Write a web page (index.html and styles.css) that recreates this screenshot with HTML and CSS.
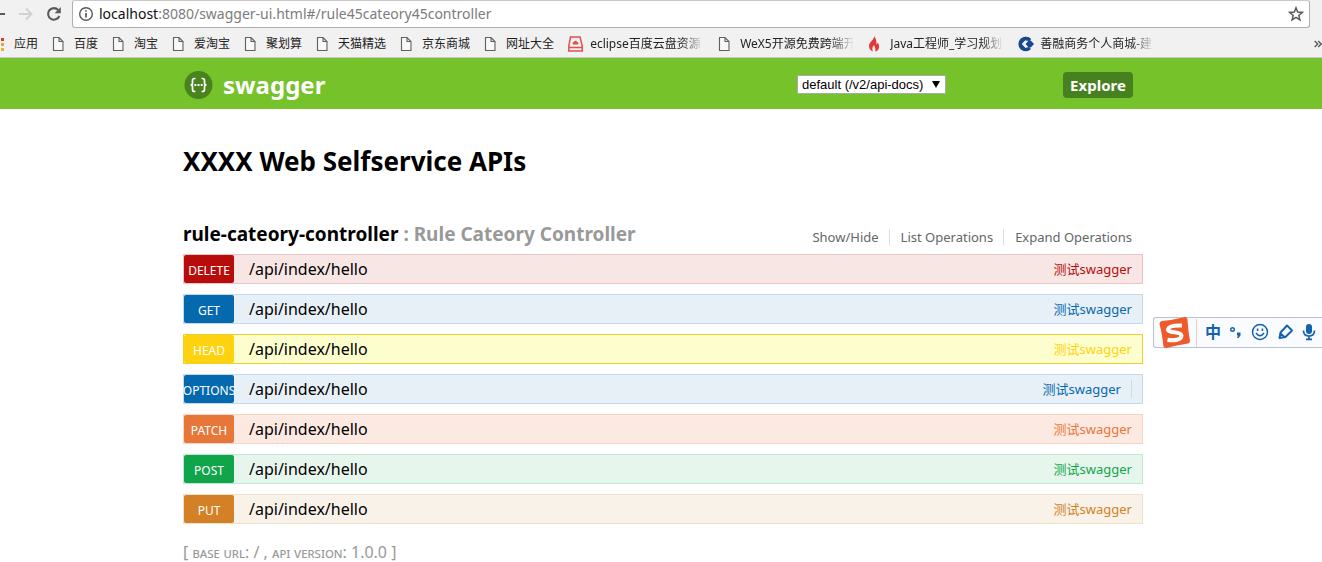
FILE: index.html
```html
<!DOCTYPE html>
<html lang="zh-CN">
<head>
<meta charset="utf-8">
<title>Swagger UI</title>
<link rel="stylesheet" href="styles.css">
</head>
<body>
<svg class="defs" width="0" height="0" aria-hidden="true">
  <symbol id="page" viewBox="0 0 16 16"><path d="M1.500 1.500h5.500l4 4v9h-9.500z M7 1.500v4h4" fill="#fff" fill-opacity=".5" stroke="#606060" stroke-width="1.100"/></symbol>
</svg>
<div class="browser">
  <div class="toolbar">
    <button class="nav" aria-label="Back"><svg width="16" height="16" viewBox="0 0 16 16"><path d="M15 8H2M8 2L2 8l6 6" fill="none" stroke="#5a5a5a" stroke-width="2"/></svg></button>
    <button class="nav" aria-label="Forward"><svg width="16" height="16" viewBox="0 0 16 16"><path d="M1 8h12M8 2.500l5.500 5.500L8 13.500" fill="none" stroke="#d2d2d2" stroke-width="2"/></svg></button>
    <button class="nav" aria-label="Reload"><svg width="16" height="16" viewBox="0 0 16 16"><path d="M13.300 10A5.800 5.800 0 1 1 12.200 4" fill="none" stroke="#5a5a5a" stroke-width="2.100"/><path d="M14.800 1v6.200H8.600z" fill="#5a5a5a"/></svg></button>
    <div class="address">
      <svg width="16" height="16" viewBox="0 0 16 16"><circle cx="8" cy="8" r="6.300" fill="none" stroke="#5a5a5a" stroke-width="1.400"/><path d="M8 7v4.500M8 4.200v1.600" stroke="#5a5a5a" stroke-width="1.700"/></svg>
      <div class="url"><span class="host">localhost</span>:8080/swagger-ui.html#/rule45cateory45controller</div>
      <svg width="16" height="16" viewBox="0 0 16 16"><path d="M8 1.800l1.700 4.300 4.600.3-3.500 3 1.100 4.500L8 11.400l-3.900 2.500 1.100-4.500-3.500-3 4.600-.3z" fill="none" stroke="#5a5a5a" stroke-width="1.500"/></svg>
    </div>
  </div>
  <nav class="bookmarks">
    <a href="#"><svg width="16" height="16" viewBox="0 0 16 16"><path fill="#d93a2b" d="M1 2h3v3H1zM5 2h3v3H5zM9 2h3v3H9z"/><path fill="#eba13c" d="M1 7h3v3H1zM9 7h3v3H9z"/><path fill="#e9b23c" d="M1 12h3v3H1zM9 12h3v3H9z"/></svg><span>应用</span></a>
    <a href="#"><svg width="16" height="16"><use href="#page"/></svg><span>百度</span></a>
    <a href="#"><svg width="16" height="16"><use href="#page"/></svg><span>淘宝</span></a>
    <a href="#"><svg width="16" height="16"><use href="#page"/></svg><span>爱淘宝</span></a>
    <a href="#"><svg width="16" height="16"><use href="#page"/></svg><span>聚划算</span></a>
    <a href="#"><svg width="16" height="16"><use href="#page"/></svg><span>天猫精选</span></a>
    <a href="#"><svg width="16" height="16"><use href="#page"/></svg><span>京东商城</span></a>
    <a href="#"><svg width="16" height="16"><use href="#page"/></svg><span>网址大全</span></a>
    <a href="#" class="long"><svg width="16" height="16" viewBox="0 0 16 16"><path d="M2.500 1h9.500L14.300 10v5H.8v-5zM.8 11.500h13.500" fill="none" stroke="#e2504a" stroke-width="1.500"/><path d="M5 8.500a1.500 1.500 0 0 1 .8-2.600 1.800 1.800 0 0 1 3.400 0A1.500 1.500 0 0 1 10 8.500z" fill="#e2504a"/></svg><span>eclipse百度云盘资源</span></a>
    <a href="#" class="long"><svg width="16" height="16"><use href="#page"/></svg><span>WeX5开源免费跨端开</span></a>
    <a href="#" class="long"><svg width="16" height="16" viewBox="0 0 16 16"><path d="M6 0c1 3-5 6-5 10 0 3 2 5 4 5.500C3.500 13 4.500 11 6 9c.5 2 2 3 1.300 6.500C10 15 11.500 12.500 11 9.500c-.2-1.500-.8-2.500-1.300-3-.1 1-.5 1.500-1.200 2C8.500 5 8 2 6 0z" fill="#e2383a"/></svg><span>Java工程师_学习规划</span></a>
    <a href="#" class="long"><svg width="16" height="16" viewBox="0 0 16 16"><path d="M13 3A7.300 7.300 0 1 0 13 13L10.500 10.500 7.500 12 3.800 8 7.500 4l3 1.500z" fill="#16498e"/><path d="M7 .7Q11 .7 13 3L10.500 6 7 4z" fill="#16498e"/><path d="M10.500 4.500h2.200L16 8l-3.300 3.500h-2.200L7.200 8z" fill="#16498e"/><path d="M7.500 4.800h2.800L7.500 8l2.800 3.200H7.500L4.500 8z" fill="#f2f1f2"/></svg><span>善融商务个人商城-建</span></a>
    <button class="more" aria-label="More bookmarks"><svg width="8" height="8" viewBox="0 0 8 8"><path d="M.7 1l3 3-3 3M4.200 1l3 3-3 3" fill="none" stroke="#5a5a5a" stroke-width="1.400"/></svg></button>
  </nav>
</div>
<header class="header">
  <div class="wrap bar">
    <a class="logo" href="#"><svg width="30" height="30" viewBox="0 0 30 30"><circle cx="15.500" cy="15" r="14" fill="#48831d"/><path d="M12.500 8.500h-1q-2 0-2 2v2.500q0 2-2 2 2 0 2 2v2.500q0 2 2 2h1M18.500 8.500h1q2 0 2 2v2.500q0 2 2 2-2 0-2 2v2.500q0 2-2 2h-1" fill="none" stroke="#fff" stroke-width="1.700"/><path d="M11.300 14h2v2h-2zM14.500 14h2v2h-2zM17.700 14h2v2h-2z" fill="#fff"/></svg><span>swagger</span></a>
    <form class="picker">
      <select aria-label="API definition"><option>default (/v2/api-docs)</option></select>
      <button type="button">Explore</button>
    </form>
  </div>
</header>
<main class="wrap">
  <h1>XXXX Web Selfservice APIs</h1>
  <section>
    <div class="resource">
      <h2><a href="#">rule-cateory-controller</a> : Rule Cateory Controller</h2>
      <ul><li><a href="#">Show/Hide</a></li><li><a href="#">List Operations</a></li><li><a href="#">Expand Operations</a></li></ul>
    </div>
    <div class="operations">
      <div class="op delete"><a class="method" href="#">DELETE</a><a class="path" href="#">/api/index/hello</a><a class="note" href="#">测试swagger</a></div>
      <div class="op get"><a class="method" href="#">GET</a><a class="path" href="#">/api/index/hello</a><a class="note" href="#">测试swagger</a></div>
      <div class="op head"><a class="method" href="#">HEAD</a><a class="path" href="#">/api/index/hello</a><a class="note" href="#">测试swagger</a></div>
      <div class="op options"><a class="method" href="#">OPTIONS</a><a class="path" href="#">/api/index/hello</a><a class="note" href="#">测试swagger</a></div>
      <div class="op patch"><a class="method" href="#">PATCH</a><a class="path" href="#">/api/index/hello</a><a class="note" href="#">测试swagger</a></div>
      <div class="op post"><a class="method" href="#">POST</a><a class="path" href="#">/api/index/hello</a><a class="note" href="#">测试swagger</a></div>
      <div class="op put"><a class="method" href="#">PUT</a><a class="path" href="#">/api/index/hello</a><a class="note" href="#">测试swagger</a></div>
    </div>
  </section>
  <footer>[ <span>base url</span>: / , <span>api version</span>: 1.0.0 ]</footer>
</main>
<aside class="ime">
  <svg class="sogou" width="34" height="32" viewBox="0 0 34 32"><path d="M4 4Q15 3 27 0q2 0 2.400 2 .8 12 2.600 22 0 2-2 2.500Q19 28 8 31q-2 0-2.600-2Q4 16 1.500 7 1.500 4.500 4 4z" fill="#ee5a2a"/><path d="M24 8.500Q10.500 8 10 12.500c-.3 4 13 1.500 13.500 6 .4 4.500-8 5.500-14 4.300" fill="none" stroke="#fff" stroke-width="4"/></svg>
  <div class="tools">
    <button>中</button>
    <button aria-label="Punctuation"><svg width="16" height="18" viewBox="0 0 16 18"><circle cx="4.500" cy="6.500" r="1.800" fill="none" stroke="#1462ad" stroke-width="1.400"/><path d="M9 9.500h3.500v3L10.500 15H9l1-2.500H9z" fill="#1462ad"/></svg></button>
    <button aria-label="Emoji"><svg width="18" height="18" viewBox="0 0 18 18"><circle cx="9" cy="9" r="7.500" fill="none" stroke="#1462ad" stroke-width="1.500"/><path d="M5 10q4 5.500 8 0" fill="none" stroke="#1462ad" stroke-width="1.500"/><path d="M5.800 5.500h1.600v2.500H5.800zM10.600 5.500h1.600v2.500h-1.600z" fill="#1462ad"/></svg></button>
    <button aria-label="Handwriting"><svg width="18" height="18" viewBox="0 0 18 18"><path d="M2.500 15l1-5.500L10 2.500l5 5L8.500 14zM3 10l5 4.500" fill="none" stroke="#1462ad" stroke-width="1.900" stroke-linejoin="round"/></svg></button>
    <button aria-label="Voice"><svg width="14" height="18" viewBox="0 0 14 18"><rect x="4" y="1" width="6" height="10" rx="3" fill="#1462ad"/><path d="M1.500 7.500Q1.500 13 7 13t5.500-5.500M7 13v3M4 16.300h6" fill="none" stroke="#1462ad" stroke-width="1.700"/></svg></button>
  </div>
</aside>
</body>
</html>
```
FILE: styles.css
```css
* { box-sizing: border-box; }
body {
  margin: 0;
  background: #fff;
  color: #000;
  font-family: "Noto Sans", "Noto Sans CJK SC", sans-serif;
  overflow-x: hidden;
}
a { color: inherit; text-decoration: none; }
button { border: 0; padding: 0; background: none; font-family: inherit; }
svg { display: block; flex: none; }
.defs { position: absolute; }

.browser { background: #f2f1f2; border-bottom: 1px solid #c9c7ca; overflow: hidden; }
.toolbar { display: flex; align-items: center; height: 28px; gap: 12px; padding-right: 12px; margin-left: -10px; }
.nav { flex: none; }
.address {
  flex: 1;
  display: flex;
  align-items: center;
  gap: 5px;
  height: 28px;
  margin-left: -2px;
  padding: 0 5px;
  background: #fff;
  border: 1px solid #b0b0b0;
  border-top-color: #c8c8c8;
  border-radius: 3px;
}
.url { flex: 1; font-size: 14px; line-height: 20px; color: #7c7c7c; }
.host { color: #111; }
.bookmarks { display: flex; align-items: center; height: 29px; gap: 14px; margin-left: -8px; padding-top: 2px; font-size: 12px; line-height: 18px; }
.bookmarks a { display: flex; flex: none; align-items: center; gap: 6px; color: #222; white-space: nowrap; }
.long span {
  width: 114px;
  overflow: hidden;
  -webkit-mask-image: linear-gradient(to right, #000 80%, transparent);
  mask-image: linear-gradient(to right, #000 80%, transparent);
}
.more { margin-left: auto; }

.wrap { width: 964px; max-width: 100%; margin: 0 auto; padding-left: 4px; }
.header { background: #76c22a; }
.bar { display: flex; align-items: center; justify-content: space-between; height: 51px; padding-top: 2px; padding-right: 10px; }
.logo { display: flex; align-items: center; gap: 10px; color: #fff; font-size: 24px; font-weight: 700; line-height: 30px; }
.picker { position: relative; display: flex; align-items: center; gap: 117px; margin: 0; }
.picker select {
  appearance: none;
  width: 149px;
  height: 19px;
  padding: 0 4px;
  border: 1px solid #a9a9a9;
  border-radius: 0;
  background: #fff;
  color: #000;
  font-family: "Liberation Sans", Arial, sans-serif;
  font-size: 13px;
}
.picker::before {
  content: "";
  position: absolute;
  left: 135px;
  top: 9px;
  border: 4px solid transparent;
  border-top: 7px solid #000;
  border-bottom: 0;
  pointer-events: none;
}
.picker button { width: 70px; height: 26px; border-radius: 4px; background: #47801f; color: #fff; font-size: 15px; font-weight: 700; }

h1 { margin: 34px 0 0; font-size: 26px; line-height: 36px; }
.resource { display: flex; justify-content: space-between; align-items: flex-end; margin-top: 40px; }
h2 { margin: 0; font-size: 19px; line-height: 30px; color: #999; }
h2 a { color: #000; }
.resource ul { display: flex; margin: 0; padding: 0 1px 4px 0; list-style: none; font-size: 13px; line-height: 16px; color: #666; }
.resource li { padding: 0 10px 0 11px; border-right: 1px solid #ddd; }
.resource li:last-child { border: 0; }

.operations { display: grid; gap: 10px; margin-top: 5px; }
.op { display: flex; align-items: center; height: 30px; border: 1px solid var(--line); background: var(--tint); }
.method { width: 50px; height: 28px; border-radius: 2px; background: var(--main); color: #fff; font-size: 12px; line-height: 31px; display: flex; justify-content: center; }
.path { margin-left: 15px; font-size: 16px; }
.note { margin-left: auto; padding: 0 10px; font-size: 13px; line-height: 18px; color: var(--main); }
.delete { --main: #b80c0a; --line: #e8c6c7; --tint: #f7e6e4; }
.get, .options { --main: #0569ad; --line: #c3d9ec; --tint: #e7f0f7; }
.head { --main: #ffd20f; --line: #efce2b; --tint: #fcffcd; }
.patch { --main: #e77739; --line: #f6d3c3; --tint: #fce9e1; }
.post { --main: #10a54a; --line: #c3e8d1; --tint: #e7f6ec; }
.put { --main: #d38026; --line: #f0e0ca; --tint: #f9f2e9; }
.options .note { margin-right: 10px; border-right: 1px solid #ccdbe8; }

footer { margin-top: 16px; font-size: 16px; line-height: 24px; color: #999; }
footer span { font-size: 14px; font-variant: small-caps; }

.ime {
  position: absolute;
  right: 0;
  top: 317px;
  display: flex;
  align-items: center;
  width: 169px;
  height: 31px;
  padding-left: 4px;
  background: #fafbfe;
  border: 1px solid #b9c1d1;
  border-right: 0;
  border-radius: 3px 0 0 3px;
}
.tools { flex: 1; display: flex; align-items: center; justify-content: space-between; height: 28px; margin-left: 4px; padding: 0 6px 2px 8px; border-left: 1px solid #f1c9bc; color: #1462ad; }
.tools button { color: #1462ad; font-size: 16px; line-height: 24px; font-weight: 700; }
```
